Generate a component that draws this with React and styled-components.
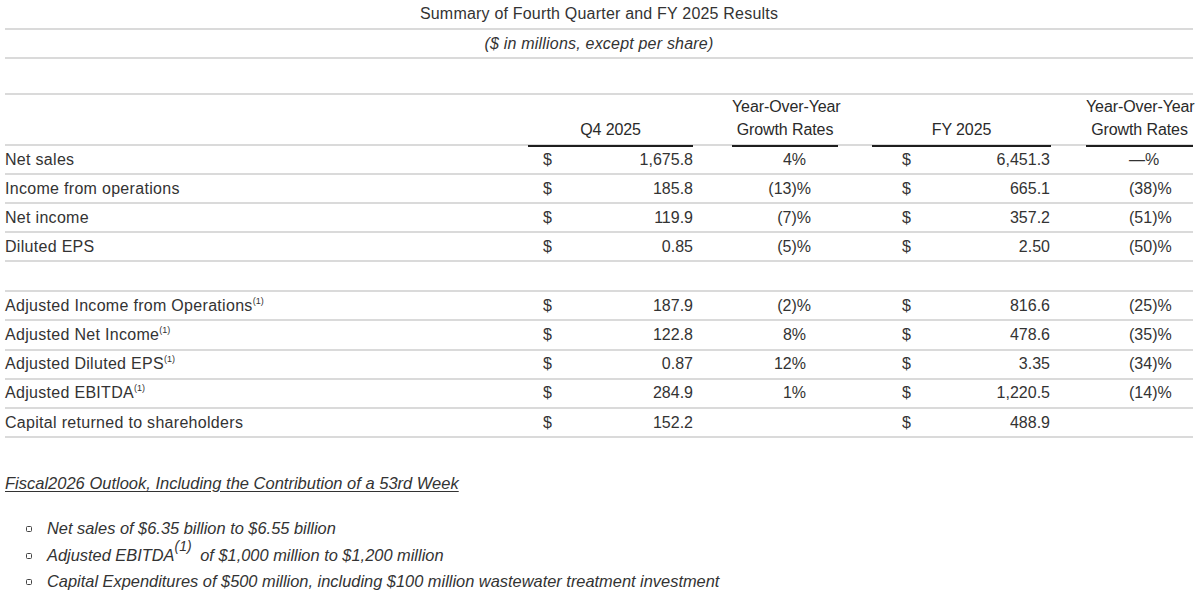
import React from "react";
import styled, { createGlobalStyle } from "styled-components";

const GlobalStyle = createGlobalStyle`
  body {
    margin: 0;
    background: #fff;
    color: #333;
    font-family: "Liberation Sans", Arial, Helvetica, sans-serif;
  }
`;

const Page = styled.div`
  width: 1188px;
  padding: 0 7px 0 5px;
  font-size: 16px;
`;

const BandRow = styled.div`
  height: ${p => p.h}px;
  box-sizing: border-box;
  border-bottom: 2px solid #dadada;
  display: flex;
  align-items: center;
  justify-content: center;
  letter-spacing: 0.2px;
  font-style: ${p => (p.italic ? "italic" : "normal")};
  color: #333;
`;

const COLS = "523px 165px 39px 106px 34px 179px 35px 107px";

const HeaderRow = styled.div`
  display: grid;
  grid-template-columns: ${COLS};
  height: 51px;
  box-sizing: border-box;
  border-bottom: 2px solid #dadada;
  align-items: end;
`;

const HeadCell = styled.div`
  text-align: center;
  line-height: 23px;
  padding-bottom: 4px;
  margin-bottom: -2px;
  border-bottom: 2px solid ${p => (p.$line ? "#1e1e1e" : "transparent")};
  color: #2a2a2a;
  white-space: nowrap;
  letter-spacing: -0.1px;
`;

const Row = styled.div`
  display: grid;
  grid-template-columns: ${COLS};
  height: ${p => p.h || 29}px;
  box-sizing: border-box;
  border-bottom: 2px solid #dadada;
  align-items: center;
`;

const Label = styled.div`
  white-space: nowrap;
  letter-spacing: 0.3px;
  sup {
    font-size: 9px;
    vertical-align: 7px;
    line-height: 0;
    letter-spacing: 0;
  }
`;

const Money = styled.div`
  display: flex;
  justify-content: space-between;
  padding-left: ${p => p.$lead}px;
  padding-right: ${p => p.$trail}px;
`;

const Pct = styled.div`
  text-align: ${p => p.$align};
  padding-left: ${p => p.$pl || 0}px;
  padding-right: ${p => p.$pr || 0}px;
  white-space: nowrap;
`;

const Outlook = styled.div`
  margin-top: 35px;
  line-height: 20px;
  font-size: 16.5px;
  font-style: italic;
  text-decoration: underline;
  text-underline-offset: 2px;
  color: #333;
`;

const Bullets = styled.ul`
  list-style: none;
  margin: 22px 0 0;
  padding: 0;
`;

const Bullet = styled.li`
  position: relative;
  padding-left: 42px;
  line-height: 26.5px;
  font-size: 16.4px;
  font-style: italic;
  color: #333;
  &::before {
    content: "";
    position: absolute;
    left: 21px;
    top: 11px;
    width: 4px;
    height: 4px;
    border: 1.5px solid #444;
    border-radius: 1.5px;
  }
  sup {
    font-size: 14px;
    vertical-align: 10px;
    line-height: 0;
    margin-right: 4px;
  }
`;

const top = [
  ["Net sales", "1,675.8", "4%", "6,451.3", "—%"],
  ["Income from operations", "185.8", "(13)%", "665.1", "(38)%"],
  ["Net income", "119.9", "(7)%", "357.2", "(51)%"],
  ["Diluted EPS", "0.85", "(5)%", "2.50", "(50)%"]
];

const adjusted = [
  ["Adjusted Income from Operations", true, "187.9", "(2)%", "816.6", "(25)%"],
  ["Adjusted Net Income", true, "122.8", "8%", "478.6", "(35)%"],
  ["Adjusted Diluted EPS", true, "0.87", "12%", "3.35", "(34)%"],
  ["Adjusted EBITDA", true, "284.9", "1%", "1,220.5", "(14)%"],
  ["Capital returned to shareholders", false, "152.2", "", "488.9", ""]
];

const DataRow = ({ label, note, q4, q4g, fy, fyg, h }) => (
  <Row h={h}>
    <Label>
      {label}
      {note && <sup>(1)</sup>}
    </Label>
    <Money $lead={15} $trail={0}>
      <span>$</span>
      <span>{q4}</span>
    </Money>
    <div />
    <Pct $align="right" $pr={q4g.startsWith("(") ? 27 : 32}>
      {q4g}
    </Pct>
    <div />
    <Money $lead={30} $trail={1}>
      <span>$</span>
      <span>{fy}</span>
    </Money>
    <div />
    <Pct $align="left" $pl={43}>
      {fyg}
    </Pct>
  </Row>
);

export default function App() {
  return (
    <Page>
      <GlobalStyle />
      <BandRow h={30}>Summary of Fourth Quarter and FY 2025 Results</BandRow>
      <BandRow h={29} italic>
        ($ in millions, except per share)
      </BandRow>
      <BandRow h={36} />
      <HeaderRow>
        <HeadCell />
        <HeadCell $line>Q4 2025</HeadCell>
        <HeadCell />
        <HeadCell $line>
          Year-Over-Year
          <br />
          Growth Rates
        </HeadCell>
        <HeadCell />
        <HeadCell $line>FY 2025</HeadCell>
        <HeadCell />
        <HeadCell $line>
          Year-Over-Year
          <br />
          Growth Rates
        </HeadCell>
      </HeaderRow>
      {top.map(([label, q4, q4g, fy, fyg]) => (
        <DataRow key={label} label={label} q4={q4} q4g={q4g} fy={fy} fyg={fyg} />
      ))}
      <Row h={30} />
      {adjusted.map(([label, note, q4, q4g, fy, fyg]) => (
        <DataRow
          key={label}
          h={29.25}
          label={label}
          note={note}
          q4={q4}
          q4g={q4g}
          fy={fy}
          fyg={fyg}
        />
      ))}
      <Outlook>Fiscal2026 Outlook, Including the Contribution of a 53rd Week</Outlook>
      <Bullets>
        <Bullet>Net sales of $6.35 billion to $6.55 billion</Bullet>
        <Bullet>
          Adjusted EBITDA<sup>(1)</sup> of $1,000 million to $1,200 million
        </Bullet>
        <Bullet>
          Capital Expenditures of $500 million, including $100 million wastewater
          treatment investment
        </Bullet>
      </Bullets>
    </Page>
  );
}
